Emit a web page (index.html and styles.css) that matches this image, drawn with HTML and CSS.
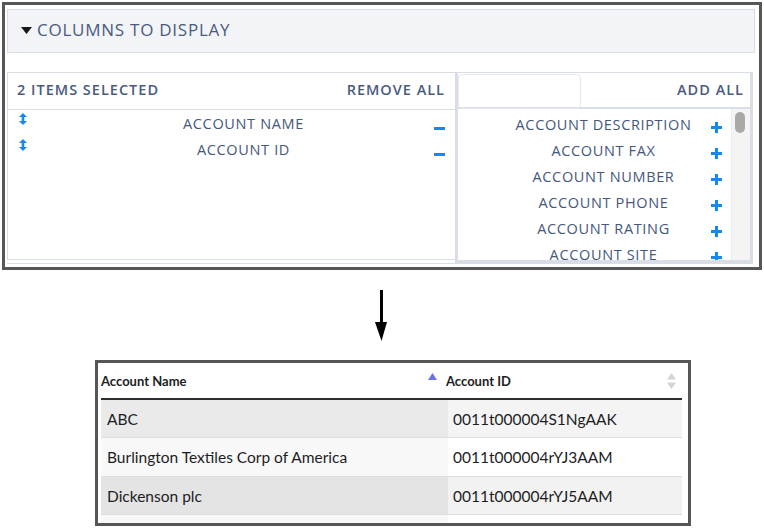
FILE: index.html
```html
<!DOCTYPE html>
<html>
<head>
<meta charset="utf-8">
<link rel="stylesheet" href="styles.css">
</head>
<body>
<div class="panel">
  <div class="section-head">
    <svg class="caret" width="11" height="8" viewBox="0 0 11 8"><path d="M0 0 L11 0 L5.5 7 Z" fill="#16171a"/></svg>
    <span>COLUMNS TO DISPLAY</span>
  </div>
  <div class="dual">
    <div class="side left">
      <div class="side-head">
        <span>2 ITEMS SELECTED</span>
        <span>REMOVE ALL</span>
      </div>
      <ul class="items">
        <li>
          <svg class="drag" width="8" height="12" viewBox="0 0 8 12"><path d="M4 0 L8 4 L5.3 4 L5.3 8 L8 8 L4 12 L0 8 L2.7 8 L2.7 4 L0 4 Z" fill="#1589ee"/></svg>
          <span class="label">ACCOUNT NAME</span>
          <span class="minus"></span>
        </li>
        <li>
          <svg class="drag" width="8" height="12" viewBox="0 0 8 12"><path d="M4 0 L8 4 L5.3 4 L5.3 8 L8 8 L4 12 L0 8 L2.7 8 L2.7 4 L0 4 Z" fill="#1589ee"/></svg>
          <span class="label">ACCOUNT ID</span>
          <span class="minus"></span>
        </li>
      </ul>
    </div>
    <div class="side right">
      <div class="side-head">
        <div class="search"></div>
        <span>ADD ALL</span>
      </div>
      <div class="scroll-area">
        <ul class="items avail">
          <li><span class="label">ACCOUNT DESCRIPTION</span><span class="plus"></span></li>
          <li><span class="label">ACCOUNT FAX</span><span class="plus"></span></li>
          <li><span class="label">ACCOUNT NUMBER</span><span class="plus"></span></li>
          <li><span class="label">ACCOUNT PHONE</span><span class="plus"></span></li>
          <li><span class="label">ACCOUNT RATING</span><span class="plus"></span></li>
          <li><span class="label">ACCOUNT SITE</span><span class="plus"></span></li>
        </ul>
        <div class="scrollbar"><div class="thumb"></div></div>
      </div>
    </div>
  </div>
</div>

<div class="arrow">
  <svg width="18" height="52" viewBox="0 0 18 52"><rect x="8" y="0" width="3" height="34" fill="#000"/><path d="M3 32 L15 32 L9.5 51 Z" fill="#000"/></svg>
</div>

<div class="table-wrap">
  <div class="grid">
    <div class="th"><span>Account Name</span><svg class="sort-up" width="9" height="7" viewBox="0 0 9 7"><path d="M4.5 0 L9 7 L0 7 Z" fill="#6f72e6"/></svg></div>
    <div class="th"><span>Account ID</span><svg class="sort-both" width="9" height="16" viewBox="0 0 9 16"><path d="M4.5 0 L9 6.5 L0 6.5 Z M0 9.5 L9 9.5 L4.5 16 Z" fill="#d4d4d8"/></svg></div>
    <div class="td c1 r1">ABC</div>
    <div class="td c2 r1">0011t000004S1NgAAK</div>
    <div class="td c1 r2">Burlington Textiles Corp of America</div>
    <div class="td c2 r2">0011t000004rYJ3AAM</div>
    <div class="td c1 r3">Dickenson plc</div>
    <div class="td c2 r3">0011t000004rYJ5AAM</div>
    <div class="td c1 r4"></div>
    <div class="td c2 r4"></div>
  </div>
</div>
</body>
</html>
```

FILE: styles.css
```css
* { box-sizing: border-box; }
body {
  margin: 0;
  background: #fff;
  font-family: "Open Sans", "Liberation Sans", sans-serif;
  width: 764px;
  height: 531px;
  overflow: hidden;
}
ul { list-style: none; margin: 0; padding: 0; }

.panel {
  margin: 2px 2px 0 2px;
  width: 760px;
  height: 268px;
  border: 3px solid #565656;
  padding: 4px 4px 0 2px;
  display: flex;
  flex-direction: column;
}
.section-head {
  height: 44px;
  background: #f3f4f8;
  border: 1px solid #d8dde6;
  display: flex;
  align-items: center;
  padding: 0 0 3px 13px;
  color: #4a5b80;
  font-size: 17px;
  letter-spacing: 0.75px;
}
.caret { margin-right: 5px; margin-top: 2px; }

.dual {
  margin-top: 19px;
  display: flex;
  width: 746px;
  height: 192px;
  border-bottom: 1px solid #d8dde6;
}
.side-head {
  display: flex;
  justify-content: space-between;
  align-items: center;
  color: #4a5b80;
  font-size: 14.5px;
  font-weight: 600;
  letter-spacing: 1px;
}
.left {
  width: 448px;
  border: 1px solid #d8dde6;
  border-right: none;
  border-bottom: 1px solid #d8dde6;
  height: 188px;
}
.left .side-head {
  height: 37px;
  padding: 0 10px 3px 9px;
  border-bottom: 1px solid #d8dde6;
}
.items li {
  display: flex;
  align-items: flex-start;
  height: 26px;
  color: #45577c;
  font-size: 14.5px;
  letter-spacing: 0.65px;
}
.left .items li { padding: 0 10px 0 11px; }
.drag { margin-top: 2px; flex: none; }
.left .label {
  flex: 1;
  text-align: center;
  padding-left: 26px;
  margin-top: 3px;
}
.minus {
  width: 11px;
  height: 3px;
  background: #1589ee;
  margin-top: 16px;
  flex: none;
}
.left .items { padding-top: 1px; }

.right {
  width: 298px;
  border: 3px solid #d8dde6;
  border-top-width: 1px;
  height: 191px;
  display: flex;
  flex-direction: column;
}
.right .side-head {
  height: 36px;
  padding: 1px 6px 0 0;
  border-bottom: 2px solid #d8dde6;
  flex: none;
}
.right .side-head span { margin-bottom: 3px; }
.search {
  width: 123px;
  height: 35px;
  border: 1px solid #e6e9ef;
  border-radius: 4px;
  align-self: flex-start;
}
.scroll-area {
  flex: 1;
  display: flex;
  overflow: hidden;
}
.avail { flex: 1; padding-top: 4px; }
.avail li { padding: 0 9px 0 0; }
.avail .label {
  flex: 1;
  text-align: center;
  padding-left: 38px;
  margin-top: 2px;
}
.plus {
  position: relative;
  width: 11px;
  height: 11px;
  margin-top: 9px;
  flex: none;
}
.plus::before, .plus::after {
  content: "";
  position: absolute;
  background: #1589ee;
}
.plus::before { left: 0; top: 4px; width: 11px; height: 3px; }
.plus::after { left: 4px; top: 0; width: 3px; height: 11px; }
.scrollbar {
  width: 19px;
  background: #f4f4f4;
  border-left: 1px solid #ececec;
  padding: 3px 3px 0 3px;
  flex: none;
}
.thumb {
  width: 10px;
  height: 21px;
  background: #a9a9a9;
  border-radius: 5px;
}

.arrow {
  margin: 20px 0 0 372px;
  height: 52px;
  display: flex;
}

.table-wrap {
  margin: 18px 0 0 95px;
  width: 596px;
  height: 166px;
  border: 3px solid #565656;
  padding: 0 7px 0 3px;
  overflow: hidden;
}
.grid {
  display: grid;
  grid-template-columns: 347px 234px;
  grid-template-rows: 37px 38px 39px 38px 20px;
  font-family: "Lato", "Open Sans", sans-serif;
  color: #1d1d1f;
}
.th {
  display: flex;
  align-items: center;
  font-size: 13px;
  font-weight: 700;
  border-bottom: 2px solid #2e2e2e;
  padding: 1px 0 0 0;
  justify-content: space-between;
  background: #fff;
}
.th:first-child { padding: 1px 11px 0 0; }
.th:first-child .sort-up { margin-top: -10px; }
.th:nth-child(2) { padding: 1px 6px 0 0; }
.th:nth-child(2) span { margin-left: -2px; }
.td {
  display: flex;
  align-items: center;
  font-size: 15.5px;
  border-bottom: 1px solid #dedede;
  padding-left: 6px;
}
.c2 { padding-left: 5px; }
.r1.c1 { background: #eaeaea; }
.r1.c2 { background: #f4f4f4; }
.r2.c1 { background: #f8f8f8; }
.r2.c2 { background: #fff; }
.r3.c1 { background: #e4e4e4; }
.r3.c2 { background: #f2f2f2; }
.r4.c1 { background: #f8f8f8; border-bottom: none; }
.r4.c2 { background: #fff; border-bottom: none; }
```
